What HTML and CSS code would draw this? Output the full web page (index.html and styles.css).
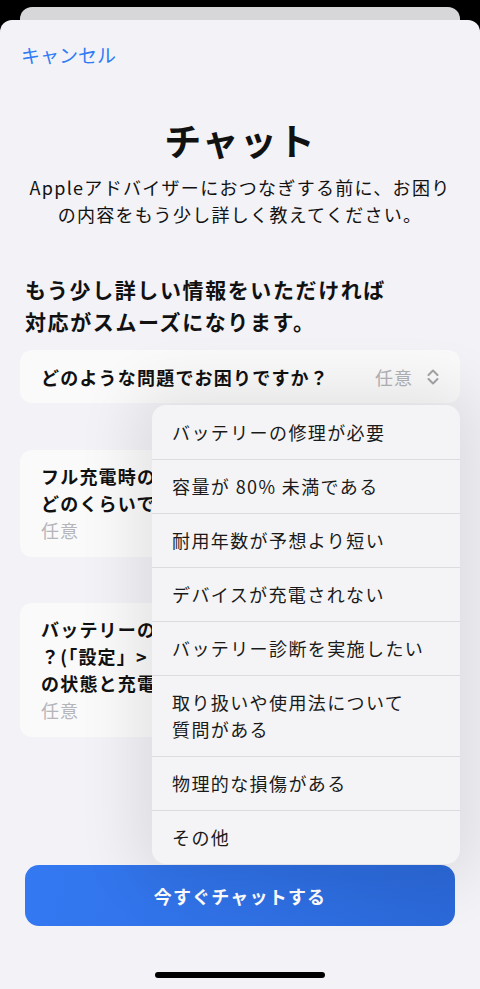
FILE: index.html
```html
<!DOCTYPE html>
<html lang="ja">

<head>
    <meta charset="UTF-8">
    <meta name="viewport" content="width=device-width, initial-scale=1.0">
    <title>チャット</title>
    <link rel="stylesheet" href="styles.css">
</head>

<body>
    <div class="back-sheet"></div>
    <div class="sheet">
        <a class="cancel" href="#">キャンセル</a>

        <h1 class="title">チャット</h1>
        <p class="subtitle">Appleアドバイザーにおつなぎする前に、お困り<br>の内容をもう少し詳しく教えてください。</p>

        <h2 class="heading">もう少し詳しい情報をいただければ<br>対応がスムーズになります。</h2>

        <div class="field-select">
            <div class="card select-row">
                <span class="question">どのような問題でお困りですか？</span>
                <span class="value">任意
                    <svg class="chevron" width="14" height="18" viewBox="0 0 14 18">
                        <path d="M2.5 7 L7 2.5 L11.5 7 M2.5 11 L7 15.5 L11.5 11" fill="none" stroke="#a3a3a8" stroke-width="2" stroke-linecap="round" stroke-linejoin="round" />
                    </svg>
                </span>
            </div>

            <!-- popup menu for the question above -->
            <ul class="menu">
                <li>バッテリーの修理が必要</li>
                <li>容量が 80% 未満である</li>
                <li>耐用年数が予想より短い</li>
                <li>デバイスが充電されない</li>
                <li>バッテリー診断を実施したい</li>
                <li>取り扱いや使用法について<br>質問がある</li>
                <li>物理的な損傷がある</li>
                <li>その他</li>
            </ul>
        </div>

        <div class="card text-field">
            <div class="question">フル充電時のバッテリー持続時間は<br>どのくらいですか？</div>
            <div class="placeholder">任意</div>
        </div>

        <div class="card text-field">
            <div class="question">バッテリーの最大容量は何パーセントです<br>？(「設定」> 「バッテリー」> 「バッテリー<br>の状態と充電」で確認できます)</div>
            <div class="placeholder">任意</div>
        </div>

        <div class="footer">
            <button class="chat-btn" type="button">今すぐチャットする</button>
            <div class="home-bar"></div>
        </div>
    </div>
</body>

</html>
```

FILE: styles.css
```css
* {
    box-sizing: border-box;
}

body {
    margin: 0;
    background-color: #000;
    font-family: "Noto Sans CJK JP", "Noto Sans", sans-serif;
    color: #111;
    width: 480px;
    height: 989px;
    overflow: hidden;
}

.back-sheet {
    margin: 7px 20px 0;
    height: 13px;
    background-color: #d7d7d9;
    border-radius: 12px 12px 0 0;
}

.sheet {
    height: 969px;
    background-color: #f2f2f7;
    border-radius: 12px 12px 0 0;
    padding: 23px 20px 0;
    display: flex;
    flex-direction: column;
}

.cancel {
    align-self: flex-start;
    margin-left: 1px;
    font-size: 19px;
    line-height: 24px;
    color: #2f7bf5;
    text-decoration: none;
}

.title {
    margin: 50px 0 0;
    text-align: center;
    font-size: 37px;
    line-height: 46px;
    font-weight: 700;
    letter-spacing: 1px;
}

.subtitle {
    margin: 11px 0 0;
    text-align: center;
    font-size: 18px;
    line-height: 27px;
    letter-spacing: 1.3px;
    white-space: nowrap;
}

.heading {
    margin: 45px 0 0 5px;
    font-size: 21px;
    line-height: 32px;
    font-weight: 700;
    letter-spacing: 1.6px;
}

.card {
    background-color: #fafafa;
    border-radius: 12px;
}

.field-select {
    position: relative;
    margin-top: 13px;
}

.select-row {
    height: 53px;
    padding: 0 20px 0 21px;
    display: flex;
    align-items: center;
    justify-content: space-between;
}

.question {
    font-size: 18px;
    font-weight: 600;
    letter-spacing: 1.2px;
    white-space: nowrap;
}

.value {
    display: flex;
    align-items: center;
    gap: 13px;
    font-size: 18px;
    color: #b2b2b7;
    letter-spacing: 1px;
}

.text-field {
    margin-top: 47px;
    padding: 13px 21px 13px;
    line-height: 27px;
    overflow: hidden;
}

.text-field + .text-field {
    margin-top: 46px;
}

.placeholder {
    font-size: 18px;
    color: #b5b5ba;
    letter-spacing: 1px;
}

.menu {
    position: absolute;
    z-index: 2;
    top: calc(100% + 2px);
    right: 0;
    width: 308px;
    margin: 0;
    padding: 0;
    list-style: none;
    background-color: #f4f4f6;
    border-radius: 14px;
    box-shadow: 0 0 60px 18px rgba(0, 0, 0, 0.09);
    overflow: hidden;
}

.menu li {
    padding: 13px 20px;
    font-size: 18px;
    line-height: 27px;
    letter-spacing: 1.4px;
    color: #1a1a1a;
    border-top: 1px solid #dcdce0;
}

.menu li:first-child {
    padding-top: 14px;
    border-top: none;
}

.footer {
    margin-top: auto;
    display: flex;
    flex-direction: column;
    align-items: center;
}

.chat-btn {
    width: 430px;
    height: 61px;
    border: none;
    border-radius: 14px;
    background: linear-gradient(100deg, #3479f2, #2b68d8);
    color: #fff;
    font-family: inherit;
    font-size: 18px;
    font-weight: 700;
    letter-spacing: 1.2px;
    cursor: pointer;
}

.home-bar {
    margin: 46px 0 11px;
    width: 170px;
    height: 6px;
    border-radius: 3px;
    background-color: #000;
}
```
